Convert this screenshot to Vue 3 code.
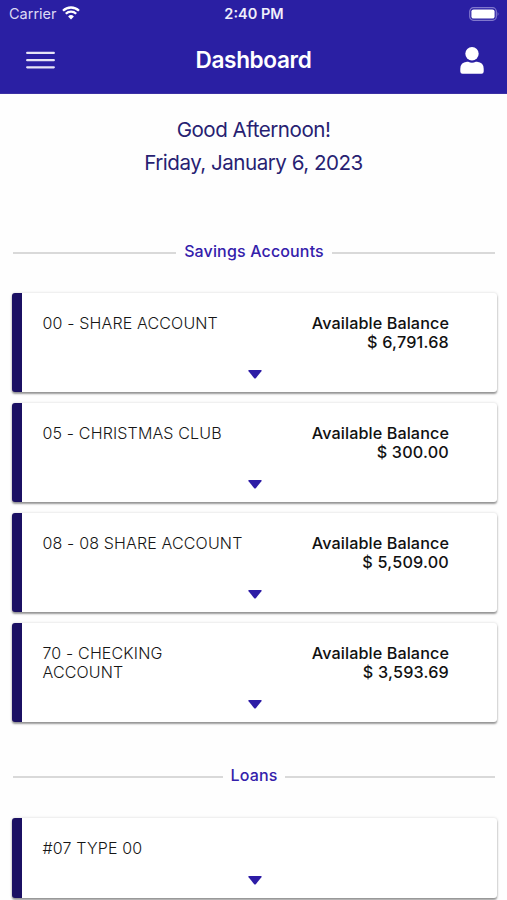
<template>
  <div class="screen">
    <header class="header">
      <div class="status">
        <div class="status-left">
          <span class="carrier">Carrier</span>
          <svg class="wifi" viewBox="0 0 18 14" width="18" height="14">
            <path d="M1 4.8A11.4 11.4 0 0 1 17 4.8" />
            <path d="M3.8 7.8A7.4 7.4 0 0 1 14.2 7.8" />
            <path class="dot" d="M9 13.4L6.1 10.5A4.1 4.1 0 0 1 11.9 10.5Z" />
          </svg>
        </div>
        <span class="time">2:40 PM</span>
        <div class="status-right">
          <svg viewBox="0 0 30 14" width="30" height="14">
            <rect class="shell" x="0.7" y="0.7" width="26.6" height="12.6" rx="3.8" />
            <rect x="2.4" y="2.4" width="23.2" height="9.2" rx="2.2" fill="#fff" />
            <path class="tip" d="M28.6 5Q30.4 7 28.6 9Z" />
          </svg>
        </div>
      </div>
      <div class="navbar">
        <button type="button" class="menu">
          <svg viewBox="0 0 29 18" width="29" height="18">
            <path d="M1.2 1.9H27.8M1.2 9.2H27.8M1.2 16.3H27.8" />
          </svg>
        </button>
        <h1>Dashboard</h1>
        <button type="button" class="user">
          <svg viewBox="0 0 24 27" width="24" height="27">
            <circle cx="12" cy="6.7" r="6.7" />
            <path
              d="M7 14.8H8.2Q12 16.6 15.8 14.8H17Q23.7 15.4 23.7 21.8V24.6Q23.7 26.8 21.5 26.8H2.5Q0.3 26.8 0.3 24.6V21.8Q0.3 15.4 7 14.8Z"
            />
          </svg>
        </button>
      </div>
    </header>
    <main>
      <div class="greeting">
        <p class="hello">Good Afternoon!</p>
        <p class="date">Friday, January 6, 2023</p>
      </div>
      <section v-for="group in groups" :key="group.title">
        <h2>
          <span>{{ group.title }}</span>
        </h2>
        <div
          v-for="item in group.items"
          :key="item.name"
          class="card"
          :class="{ short: !item.balance }"
        >
          <div class="row">
            <p class="name">{{ item.name }}</p>
            <div v-if="item.balance" class="balance">
              <p class="label">Available Balance</p>
              <p class="amount">$ {{ item.balance }}</p>
            </div>
          </div>
          <svg class="arrow" viewBox="0 0 14 9" width="14" height="9">
            <path d="M0.8 0H13.2Q14 0.4 13.4 1.3L7.8 8.2Q7 9 6.2 8.2L0.6 1.3Q0 0.4 0.8 0Z" />
          </svg>
        </div>
      </section>
    </main>
  </div>
</template>

<script setup>
const groups = [
  {
    title: "Savings Accounts",
    items: [
      { name: "00 - SHARE ACCOUNT", balance: "6,791.68" },
      { name: "05 - CHRISTMAS CLUB", balance: "300.00" },
      { name: "08 - 08 SHARE ACCOUNT", balance: "5,509.00" },
      { name: "70 - CHECKING ACCOUNT", balance: "3,593.69" },
    ],
  },
  {
    title: "Loans",
    items: [{ name: "#07 TYPE 00" }],
  },
];
</script>

<style>
body {
  background-color: #fff;
}
</style>

<style scoped>
.screen {
  box-sizing: border-box;
  width: 100%;
  height: 900px;
  overflow: hidden;
  font-family: Inter, "Liberation Sans", sans-serif;
  background-color: #fefefe;
}
p,
h1,
h2 {
  margin: 0;
}
button {
  padding: 0;
  border: none;
  background: none;
}
svg {
  display: block;
}
.header {
  box-sizing: border-box;
  height: 94px;
  background-color: #2a1fa3;
  border-bottom: 1px solid #3c30a4;
  color: #fff;
}
.status {
  display: grid;
  grid-template-columns: 1fr auto 1fr;
  align-items: center;
  height: 27px;
  padding: 0 8px 0 9px;
}
.status-left {
  display: flex;
  align-items: center;
  gap: 5px;
}
.status-right {
  display: flex;
  justify-content: flex-end;
}
.carrier {
  font-size: 14.5px;
  color: #dcd9f3;
}
.wifi {
  margin-top: -2px;
}
.wifi path {
  fill: none;
  stroke: #fff;
  stroke-width: 2.3;
}
.wifi .dot {
  fill: #fff;
  stroke: none;
}
.time {
  font-size: 14.5px;
  font-weight: 600;
  color: #f0effb;
}
.shell {
  fill: none;
  stroke: #8178cd;
  stroke-width: 1.2;
}
.tip {
  fill: #8178cd;
}
.navbar {
  display: grid;
  grid-template-columns: 1fr auto 1fr;
  align-items: center;
  height: 66px;
  padding: 0 23px 0 26px;
}
.menu svg {
  fill: none;
  stroke: #e6e4f6;
  stroke-width: 2.3;
  stroke-linecap: round;
}
h1 {
  margin: 0 2px 0 -1px;
  font-size: 22.6px;
  font-weight: 600;
  line-height: 28px;
  letter-spacing: -0.35px;
}
.user {
  justify-self: end;
}
.user svg {
  fill: #fff;
}
.greeting {
  padding-top: 19px;
  text-align: center;
  font-size: 20.6px;
  line-height: 33px;
  letter-spacing: -0.5px;
  color: #281f72;
}
h2 {
  display: flex;
  align-items: center;
  gap: 8px;
  margin: 0 12px 0 13px;
  padding: 62px 0 31px;
  font-size: 16px;
  font-weight: 500;
  line-height: 21px;
  letter-spacing: 0.15px;
  color: #3420ab;
}
h2::before,
h2::after {
  content: "";
  flex: 1;
  height: 2px;
  margin-top: 2px;
  background-color: #d9d9d9;
}
section + section h2 {
  padding: 32px 0;
}
.card {
  box-sizing: border-box;
  display: flex;
  flex-direction: column;
  justify-content: space-between;
  height: 99px;
  margin: 0 10px 11px 11.5px;
  padding: 21px 48px 13.5px 21px;
  border-left: 10px solid #1b1063;
  border-radius: 3px;
  background-color: #fff;
  box-shadow: 0 2px 2px rgba(0, 0, 0, 0.38), 0 0 3px rgba(0, 0, 0, 0.16);
}
.card.short {
  height: 80px;
}
.row {
  display: flex;
  justify-content: space-between;
  font-size: 16px;
  line-height: 19.4px;
}
.name {
  width: 203px;
  font-weight: 300;
  letter-spacing: 0.15px;
  color: #161616;
}
.balance {
  text-align: right;
  font-weight: 500;
  color: #111;
}
.label {
  font-size: 16.2px;
  letter-spacing: 0.09px;
}
.amount {
  font-size: 16.2px;
  letter-spacing: 0.2px;
}
.arrow {
  align-self: center;
  margin-left: 18px;
  fill: #2d1ca6;
}
</style>
